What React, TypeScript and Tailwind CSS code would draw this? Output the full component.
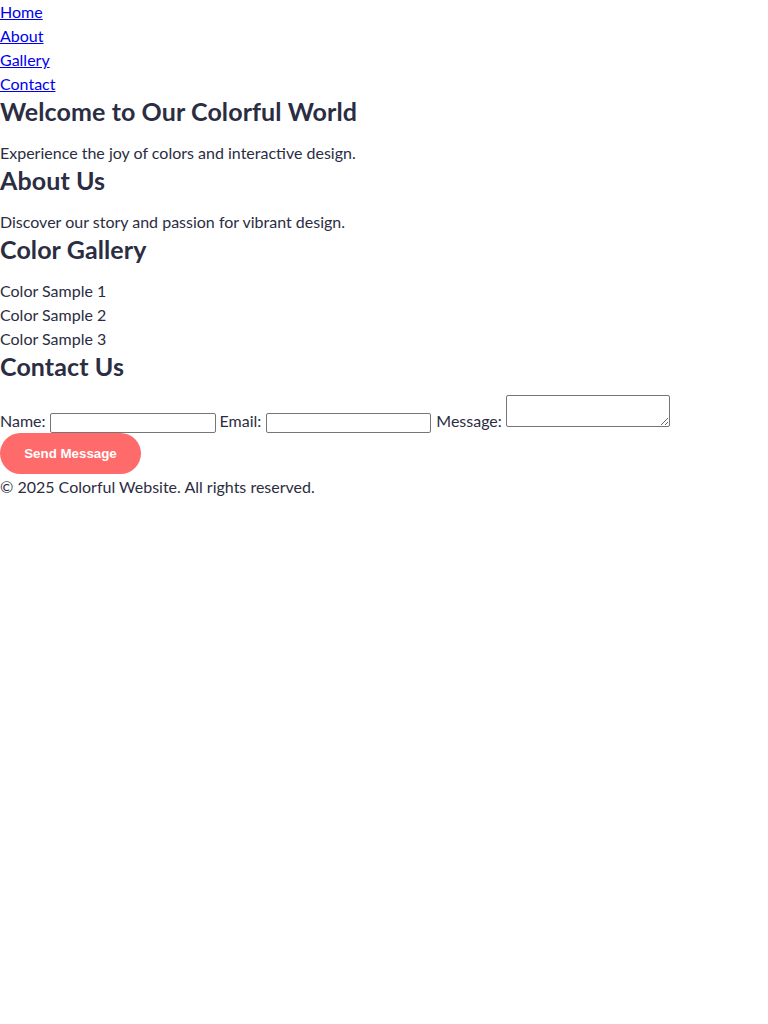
import React from 'react'

const links = ['Home', 'About', 'Gallery', 'Contact']
const samples = ['Color Sample 1', 'Color Sample 2', 'Color Sample 3']

const headCls = 'text-[25px] tracking-[0.1px] font-bold leading-[30px]'
const fieldCls = 'border border-[#767676] rounded-[2px] bg-white'

export default function App() {
  return (
    <div className="min-h-screen bg-white text-[#2b2d42] text-base leading-6 font-['Lato','Noto_Sans',sans-serif]">
      <nav>
        <ul>
          {links.map((l) => (
            <li key={l}>
              <a href={'#' + l.toLowerCase()} className="text-[#0000ee] underline">
                {l}
              </a>
            </li>
          ))}
        </ul>
      </nav>

      <section>
        <h1 className={headCls + ' mb-[15px]'}>Welcome to Our Colorful World</h1>
        <p>Experience the joy of colors and interactive design.</p>
      </section>

      <section>
        <h2 className={headCls + ' mb-[15px]'}>About Us</h2>
        <p>Discover our story and passion for vibrant design.</p>
      </section>

      <section>
        <h2 className={headCls + ' mb-[15px]'}>Color Gallery</h2>
        {samples.map((s) => (
          <div key={s}>{s}</div>
        ))}
      </section>

      <section>
        <h2 className={headCls + ' mb-[14px]'}>Contact Us</h2>
        <form onSubmit={(e) => e.preventDefault()}>
          <div className="flex items-end">
            <label className="mr-[4px]">Name:</label>
            <input type="text" className={fieldCls + ' w-[166px] h-[20px] mr-[4px]'} />
            <label className="mr-[5px]">Email:</label>
            <input type="email" className={fieldCls + ' w-[165px] h-[20px] mr-[5px]'} />
            <label className="mr-[4px]">Message:</label>
            <textarea className={fieldCls + ' w-[164px] h-[32px] mb-[6px] resize'} />
          </div>
          <button
            type="submit"
            className="block w-[141px] h-[41px] rounded-full bg-[#ff6b6b] text-white text-[13.33px] font-bold font-['Liberation_Sans',Arial,sans-serif]"
          >
            Send Message
          </button>
        </form>
      </section>

      <footer className="mt-[1px]">
        <p>© 2025 Colorful Website. All rights reserved.</p>
      </footer>
    </div>
  )
}
